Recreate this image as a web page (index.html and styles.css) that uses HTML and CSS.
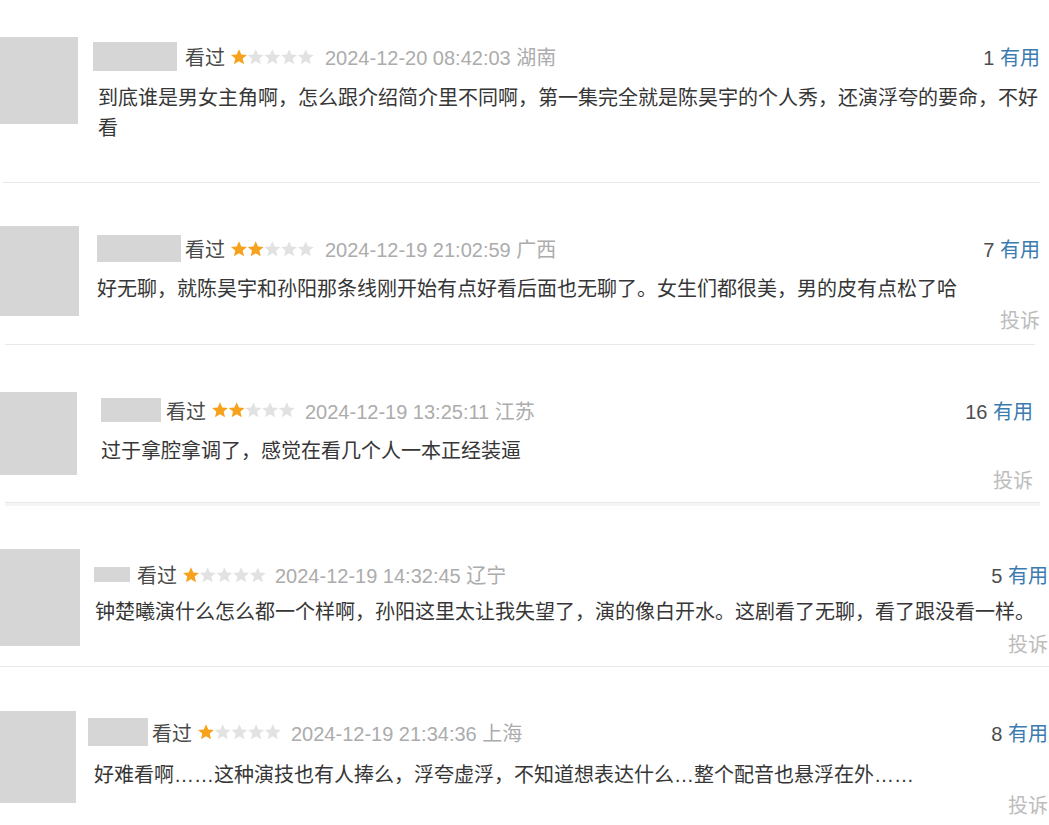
FILE: index.html
```html
<!DOCTYPE html>
<html lang="zh-CN">
<head>
    <meta charset="UTF-8">
    <meta name="viewport" content="width=device-width, initial-scale=1.0">
    <title>短评</title>
    <link rel="stylesheet" href="styles.css">
</head>
<body>
    <!-- shared star shape -->
    <svg class="defs" width="0" height="0">
        <defs>
            <polygon id="star" points="8,0.3 10.3,5.5 16,5.9 11.7,9.6 13,15.3 8,12.3 3,15.3 4.3,9.6 0,5.9 5.7,5.5"/>
        </defs>
    </svg>

    <div class="comments">
        <div class="comment r1">
            <div class="avatar"></div>
            <div class="main">
                <div class="info">
                    <span class="name"></span>
                    <span class="watched">看过</span>
                    <svg class="stars" width="83" height="16" viewBox="0 0 83 16">
                        <use href="#star" x="0" class="on"/>
                        <use href="#star" x="16.7"/>
                        <use href="#star" x="33.4"/>
                        <use href="#star" x="50.1"/>
                        <use href="#star" x="66.8"/>
                    </svg>
                    <span class="time">2024-12-20 08:42:03 湖南</span>
                    <span class="votes">1 <a href="#">有用</a></span>
                </div>
                <p class="text">到底谁是男女主角啊，怎么跟介绍简介里不同啊，第一集完全就是陈昊宇的个人秀，还演浮夸的要命，不好看</p>
            </div>
        </div>
        <div class="sep s1"></div>

        <div class="comment r2">
            <div class="avatar"></div>
            <div class="main">
                <div class="info">
                    <span class="name"></span>
                    <span class="watched">看过</span>
                    <svg class="stars" width="83" height="16" viewBox="0 0 83 16">
                        <use href="#star" x="0" class="on"/>
                        <use href="#star" x="16.7" class="on"/>
                        <use href="#star" x="33.4"/>
                        <use href="#star" x="50.1"/>
                        <use href="#star" x="66.8"/>
                    </svg>
                    <span class="time">2024-12-19 21:02:59 广西</span>
                    <span class="votes">7 <a href="#">有用</a></span>
                </div>
                <p class="text">好无聊，就陈昊宇和孙阳那条线刚开始有点好看后面也无聊了。女生们都很美，男的皮有点松了哈</p>
                <div class="report">投诉</div>
            </div>
        </div>
        <div class="sep s2"></div>

        <div class="comment r3">
            <div class="avatar"></div>
            <div class="main">
                <div class="info">
                    <span class="name"></span>
                    <span class="watched">看过</span>
                    <svg class="stars" width="83" height="16" viewBox="0 0 83 16">
                        <use href="#star" x="0" class="on"/>
                        <use href="#star" x="16.7" class="on"/>
                        <use href="#star" x="33.4"/>
                        <use href="#star" x="50.1"/>
                        <use href="#star" x="66.8"/>
                    </svg>
                    <span class="time">2024-12-19 13:25:11 江苏</span>
                    <span class="votes">16 <a href="#">有用</a></span>
                </div>
                <p class="text">过于拿腔拿调了，感觉在看几个人一本正经装逼</p>
                <div class="report">投诉</div>
            </div>
        </div>
        <div class="sep s3"></div>

        <div class="comment r4">
            <div class="avatar"></div>
            <div class="main">
                <div class="info">
                    <span class="name"></span>
                    <span class="watched">看过</span>
                    <svg class="stars" width="83" height="16" viewBox="0 0 83 16">
                        <use href="#star" x="0" class="on"/>
                        <use href="#star" x="16.7"/>
                        <use href="#star" x="33.4"/>
                        <use href="#star" x="50.1"/>
                        <use href="#star" x="66.8"/>
                    </svg>
                    <span class="time">2024-12-19 14:32:45 辽宁</span>
                    <span class="votes">5 <a href="#">有用</a></span>
                </div>
                <p class="text">钟楚曦演什么怎么都一个样啊，孙阳这里太让我失望了，演的像白开水。这剧看了无聊，看了跟没看一样。</p>
                <div class="report">投诉</div>
            </div>
        </div>
        <div class="sep s4"></div>

        <div class="comment r5">
            <div class="avatar"></div>
            <div class="main">
                <div class="info">
                    <span class="name"></span>
                    <span class="watched">看过</span>
                    <svg class="stars" width="83" height="16" viewBox="0 0 83 16">
                        <use href="#star" x="0" class="on"/>
                        <use href="#star" x="16.7"/>
                        <use href="#star" x="33.4"/>
                        <use href="#star" x="50.1"/>
                        <use href="#star" x="66.8"/>
                    </svg>
                    <span class="time">2024-12-19 21:34:36 上海</span>
                    <span class="votes">8 <a href="#">有用</a></span>
                </div>
                <p class="text">好难看啊……这种演技也有人捧么，浮夸虚浮，不知道想表达什么…整个配音也悬浮在外……</p>
                <div class="report">投诉</div>
            </div>
        </div>
    </div>
</body>
</html>
```

FILE: styles.css
```css
body {
    margin: 0;
    background-color: #fff;
    font-family: "Liberation Sans", "Noto Sans CJK SC", sans-serif;
    font-size: 20px;
    color: #333;
    overflow: hidden;
}

.defs {
    position: absolute;
}

.comment {
    display: flex;
    align-items: flex-start;
    margin-top: var(--mt);
    padding-right: var(--pr);
    padding-bottom: var(--pb);
}

.avatar {
    flex: none;
    width: var(--aw);
    height: var(--ah);
    background-color: #d6d6d6;
}

.main {
    flex: 1;
    margin-left: var(--gap);
    padding-top: var(--pt);
}

.info {
    display: flex;
    align-items: center;
    height: var(--nh);
    white-space: nowrap;
}

.name {
    flex: none;
    width: var(--nw);
    height: var(--nh);
    margin-right: var(--ng);
    background-color: #d6d6d6;
}

.watched {
    color: #4a4a4a;
}

.stars {
    flex: none;
    margin: 0 var(--sg) 0 6px;
}

.stars use {
    fill: #e2e2e2;
}

.stars use.on {
    fill: #f7a21d;
}

.time {
    color: #acacac;
}

.votes {
    margin-left: auto;
    color: #4d4d4d;
}

.votes a {
    color: #3b7bb0;
    text-decoration: none;
}

.text {
    margin: var(--tm) 0 0 var(--ti);
    line-height: 30px;
    color: #363636;
}

.report {
    margin-top: var(--rm);
    line-height: 30px;
    text-align: right;
    color: #bdbdbd;
}

.sep {
    height: 1px;
    background-color: #e9e9e9;
}

/* each row was cut from a different screenshot, so offsets differ a little */
.r1 {
    --mt: 37px; --pb: 39px; --pr: 9px;
    --aw: 78px; --ah: 87px; --gap: 15px; --pt: 5px;
    --nw: 84px; --nh: 29px; --ng: 8px; --sg: 11px;
    --tm: 12px; --ti: 5px;
}

.r2 {
    --mt: 43px; --pb: 8px; --pr: 9px;
    --aw: 79px; --ah: 90px; --gap: 18px; --pt: 9px;
    --nw: 84px; --nh: 27px; --ng: 4px; --sg: 11px;
    --tm: 12px; --ti: 0px; --rm: 2px;
}

.r3 {
    --mt: 47px; --pb: 6px; --pr: 16px;
    --aw: 77px; --ah: 83px; --gap: 24px; --pt: 6px;
    --nw: 60px; --nh: 24px; --ng: 5px; --sg: 10px;
    --tm: 14px; --ti: 0px; --rm: 0px;
}

.r4 {
    --mt: 43px; --pb: 6px; --pr: 1px;
    --aw: 80px; --ah: 97px; --gap: 14px; --pt: 18px;
    --nw: 36px; --nh: 15px; --ng: 7px; --sg: 9px;
    --tm: 15px; --ti: 1px; --rm: 3px;
}

.r5 {
    --mt: 44px; --pb: 0px; --pr: 1px;
    --aw: 76px; --ah: 92px; --gap: 12px; --pt: 7px;
    --nw: 60px; --nh: 28px; --ng: 4px; --sg: 10px;
    --tm: 14px; --ti: 6px; --rm: 1px;
}

.s1 {
    margin: 0 9px 0 3px;
}

.s2 {
    margin: 0 14px 0 5px;
}

.s3 {
    margin: 0 9px 0 5px;
    border-bottom: 3px solid #f5f5f5;
}

.s4 {
    margin: 0;
}
```
